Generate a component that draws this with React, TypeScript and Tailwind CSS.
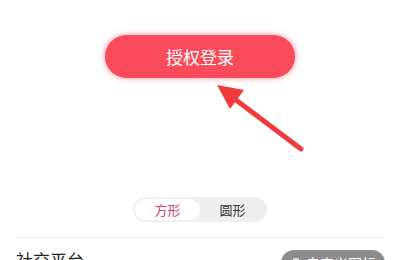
import React, { useState } from 'react';

const CJK = { fontFamily: '"Noto Sans CJK SC", "Noto Sans", sans-serif' };

export default function App() {
    const [shape, setShape] = useState<'square' | 'round'>('square');

    return (
        <div className="relative w-[400px] h-[260px] overflow-hidden bg-white" style={CJK}>
            {/* Login button */}
            <div className="flex justify-center pt-[35px]">
                <button className="w-[190px] h-[43px] rounded-full bg-[#fa4b5a] text-white text-[17px] shadow-[0_0_6px_rgba(250,75,90,0.6)]">
                    授权登录
                </button>
            </div>

            {/* Annotation arrow */}
            <svg className="absolute left-0 top-0 pointer-events-none" width="400" height="260">
                <line x1="301" y1="149" x2="228" y2="94" stroke="#f23a3c" strokeWidth="5" strokeLinecap="round" />
                <polygon points="217,85 244,90 230,109" fill="#f23a3c" />
            </svg>

            {/* Shape toggle */}
            <div className="flex justify-center mt-[119px]">
                <div className="flex w-[134px] h-[25px] rounded-full bg-[#efefef] p-[2px] text-[13px]">
                    <button
                        onClick={() => setShape('square')}
                        className={`flex-1 rounded-full ${shape === 'square' ? 'bg-white text-[#c8456c]' : 'text-[#333]'}`}
                    >
                        方形
                    </button>
                    <button
                        onClick={() => setShape('round')}
                        className={`flex-1 rounded-full ${shape === 'round' ? 'bg-white text-[#c8456c]' : 'text-[#333]'}`}
                    >
                        圆形
                    </button>
                </div>
            </div>

            <div className="mx-4 mt-[15px] h-px bg-[#e8e8e8]" />

            {/* Social platforms */}
            <div className="flex items-start justify-between pl-4 pr-[15px] pt-[12px]">
                <span className="text-[17px] leading-none text-[#222] mt-[1px]">社交平台</span>
                <button className="flex items-center gap-[4px] h-[26px] px-[9px] rounded-full bg-[#8c8c8c] text-white text-[14px]">
                    <svg width="12" height="12" viewBox="0 0 24 24" fill="none" stroke="white" strokeWidth="2.5">
                        <circle cx="12" cy="9" r="6" />
                        <path d="M6 22h12" />
                    </svg>
                    自定义图标
                </button>
            </div>
        </div>
    );
}
